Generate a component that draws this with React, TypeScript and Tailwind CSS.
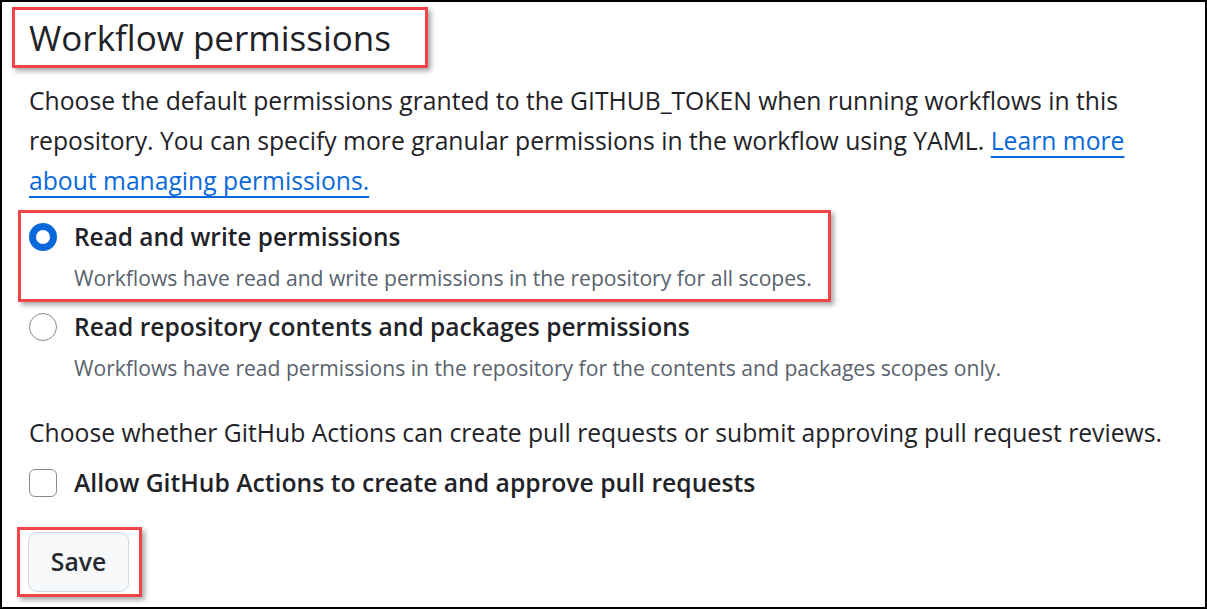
import React from "react";

const font = { fontFamily: '"Open Sans", "Noto Sans", Arial, sans-serif' };

export default function App() {
  return (
    <div
      className="w-[1207px] h-[609px] border-2 border-black bg-white text-[#1f2328] overflow-hidden"
      style={font}
    >
      <div className="pl-[27px] pr-[20px]">
        {/* Heading with annotation box */}
        <div className="ml-[-17px] mt-[5px] w-[416px] h-[61px] border-[3px] border-[#f0434a] shadow-[3px_3px_5px_rgba(0,0,0,0.35)] pl-[14px] flex items-center">
          <h2 className="text-[35px] leading-[40px] font-normal whitespace-nowrap">
            Workflow permissions
          </h2>
        </div>

        {/* Description paragraph */}
        <p className="mt-[13px] text-[24.7px] leading-[40px]">
          <span className="block whitespace-nowrap">
            Choose the default permissions granted to the GITHUB_TOKEN when running workflows in this
          </span>
          <span className="block whitespace-nowrap">
            repository. You can specify more granular permissions in the workflow using YAML.{" "}
            <a className="text-[#0969da] underline underline-offset-[6px] decoration-[1.5px]">Learn more</a>
          </span>
          <span className="block whitespace-nowrap">
            <a className="text-[#0969da] underline underline-offset-[6px] decoration-[1.5px]">about managing permissions.</a>
          </span>
        </p>

        {/* Radio 1 with annotation box */}
        <div className="ml-[-11px] mt-[9px] w-[813px] border-[3px] border-[#f0434a] shadow-[3px_3px_5px_rgba(0,0,0,0.35)] pl-[8px] pt-[6px] pb-[4px]">
          <div className="flex items-center h-[36px]">
            <span className="w-[28px] h-[28px] rounded-full border-[7px] border-[#0969da] bg-white shrink-0" />
            <span className="ml-[17px] text-[24.4px] font-semibold whitespace-nowrap">
              Read and write permissions
            </span>
          </div>
          <div className="mt-[6px] pl-[45px] h-[34px] leading-[34px] text-[21.1px] text-[#59636e] whitespace-nowrap">
            Workflows have read and write permissions in the repository for all scopes.
          </div>
        </div>

        {/* Radio 2 */}
        <div className="mt-[7px]">
          <div className="flex items-center h-[36px]">
            <span className="w-[28px] h-[28px] rounded-full border-[1.5px] border-[#818b98] bg-white shrink-0" />
            <span className="ml-[17px] text-[24.55px] font-semibold whitespace-nowrap">
              Read repository contents and packages permissions
            </span>
          </div>
          <div className="mt-[6px] pl-[45px] h-[34px] leading-[34px] text-[21.1px] text-[#59636e] whitespace-nowrap">
            Workflows have read permissions in the repository for the contents and packages scopes only.
          </div>
        </div>

        {/* Pull request question */}
        <p className="mt-[28px] text-[24.7px] leading-[40px] whitespace-nowrap">
          Choose whether GitHub Actions can create pull requests or submit approving pull request reviews.
        </p>

        <div className="mt-[12px] flex items-center h-[36px]">
          <span className="w-[28px] h-[28px] rounded-[6px] border-[1.5px] border-[#818b98] bg-white shrink-0" />
          <span className="ml-[17px] text-[24.7px] font-semibold whitespace-nowrap">
            Allow GitHub Actions to create and approve pull requests
          </span>
        </div>

        {/* Save with annotation box */}
        <div className="ml-[-12px] mt-[26px] w-[125px] border-[3px] border-[#f0434a] shadow-[3px_3px_5px_rgba(0,0,0,0.35)] pl-[8px] pr-[10px] pt-[2px] pb-[2px]">
          <button className="w-[101px] h-[60px] rounded-[9px] border-[1.5px] border-[#d1d9e0] bg-[#f6f8fa] text-[24.7px] font-semibold text-[#25292e]">
            Save
          </button>
        </div>
      </div>
    </div>
  );
}
